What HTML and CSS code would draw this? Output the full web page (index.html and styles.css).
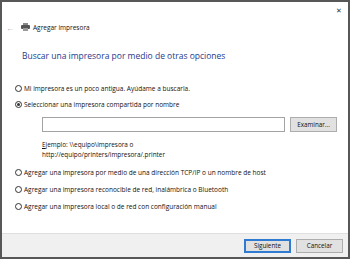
FILE: index.html
```html
<!DOCTYPE html>
<html lang="es">
<head>
    <meta charset="UTF-8">
    <title>Agregar impresora</title>
    <link rel="stylesheet" href="styles.css">
</head>
<body>
<div class="win">
    <span class="close">&#x2715;</span>

    <div class="top">
        <span class="back">&#x2190;</span>
        <svg class="printer" width="9" height="8" viewBox="0 0 9 8">
            <rect x="2" y="0" width="5" height="2" fill="#8a8a8a"/>
            <rect x="0" y="2" width="9" height="4" rx="1" fill="#555"/>
            <rect x="2" y="5" width="5" height="3" fill="#9a9a9a"/>
        </svg>
        <span class="title">Agregar impresora</span>
    </div>

    <div class="main">
        <h1>Buscar una impresora por medio de otras opciones</h1>

        <div class="opt first"><span class="radio"></span>Mi impresora es un poco antigua. Ayúdame a buscarla.</div>
        <div class="opt"><span class="radio on"></span>Seleccionar una impresora compartida por nombre</div>

        <div class="share">
            <div class="row">
                <span class="box"></span>
                <span class="btn browse">Examinar...</span>
            </div>
            <p class="hint"><u>E</u>jemplo: \\equipo\impresora o<br>http://equipo/printers/impresora/.printer</p>
        </div>

        <div class="opt after"><span class="radio"></span>Agregar una impresora por medio de una dirección TCP/IP o un nombre de host</div>
        <div class="opt far"><span class="radio"></span>Agregar una impresora reconocible de red, inalámbrica o Bluetooth</div>
        <div class="opt far"><span class="radio"></span>Agregar una impresora local o de red con configuración manual</div>
    </div>

    <div class="foot">
        <span class="btn next">Siguiente</span>
        <span class="btn">Cancelar</span>
    </div>
</div>
</body>
</html>
```

FILE: styles.css
```css
body{
    margin: 0;
    font-family: "Open Sans", "Noto Sans", sans-serif;
    color: #111;
}

/*窗口*/
.win{
    width: 350px;
    height: 259px;
    box-sizing: border-box;
    border: 2px solid #575757;
    background: #fff;
    display: flex;
    flex-direction: column;
    position: relative;
}

.close{
    position: absolute;
    top: 4px;
    right: 6px;
    font-size: 7px;
    color: #333;
}

.top{
    display: flex;
    align-items: center;
    height: 14px;
    margin-top: 18px;
    padding-left: 4px;
}
.back{
    font-size: 8px;
    color: #aaa;
    width: 15px;
}
.printer{
    margin-right: 3px;
}
.title{
    font-size: 6.5px;
}

.main{
    flex: 1;
    padding-left: 13px;
}

h1{
    margin: 15px 0 0 7px;
    font-size: 8.5px;
    line-height: 14px;
    font-weight: normal;
    color: #233a8e;
}

/*单选项*/
.opt{
    display: flex;
    align-items: center;
    height: 12px;
    font-size: 6.5px;
    margin-top: 4px;
}
.opt.first{ margin-top: 19px; }
.opt.after{ margin-top: 6px; }
.opt.far{ margin-top: 5px; }

.radio{
    width: 5px;
    height: 5px;
    border: 1px solid #333;
    border-radius: 50%;
    margin-right: 2px;
    display: flex;
    align-items: center;
    justify-content: center;
}
.radio.on::after{
    content: "";
    width: 3px;
    height: 3px;
    border-radius: 50%;
    background: #333;
}

.share{
    padding-left: 27px;
    margin-top: 7px;
}
.row{
    display: flex;
    gap: 5px;
}
.box{
    width: 241px;
    height: 13px;
    border: 1px solid #a3a3a3;
}

.btn{
    display: flex;
    align-items: center;
    justify-content: center;
    box-sizing: border-box;
    width: 47px;
    height: 15px;
    font-size: 6.3px;
    background: #e1e1e1;
    border: 1px solid #adadad;
}

.hint{
    margin: 8px 0 0;
    font-size: 6.4px;
    line-height: 10px;
}
.hint u{
    text-decoration: underline;
}

/*底部按钮*/
.foot{
    height: 23px;
    background: #f0f0f0;
    border-top: 1px solid #dfdfdf;
    display: flex;
    justify-content: flex-end;
    align-items: center;
    gap: 5px;
    padding-right: 5px;
}
.foot .btn{
    height: 14px;
}
.btn.next{
    border: 1px solid #2f7bd2;
    box-shadow: inset 0 0 0 1px #2f7bd2;
}
```
